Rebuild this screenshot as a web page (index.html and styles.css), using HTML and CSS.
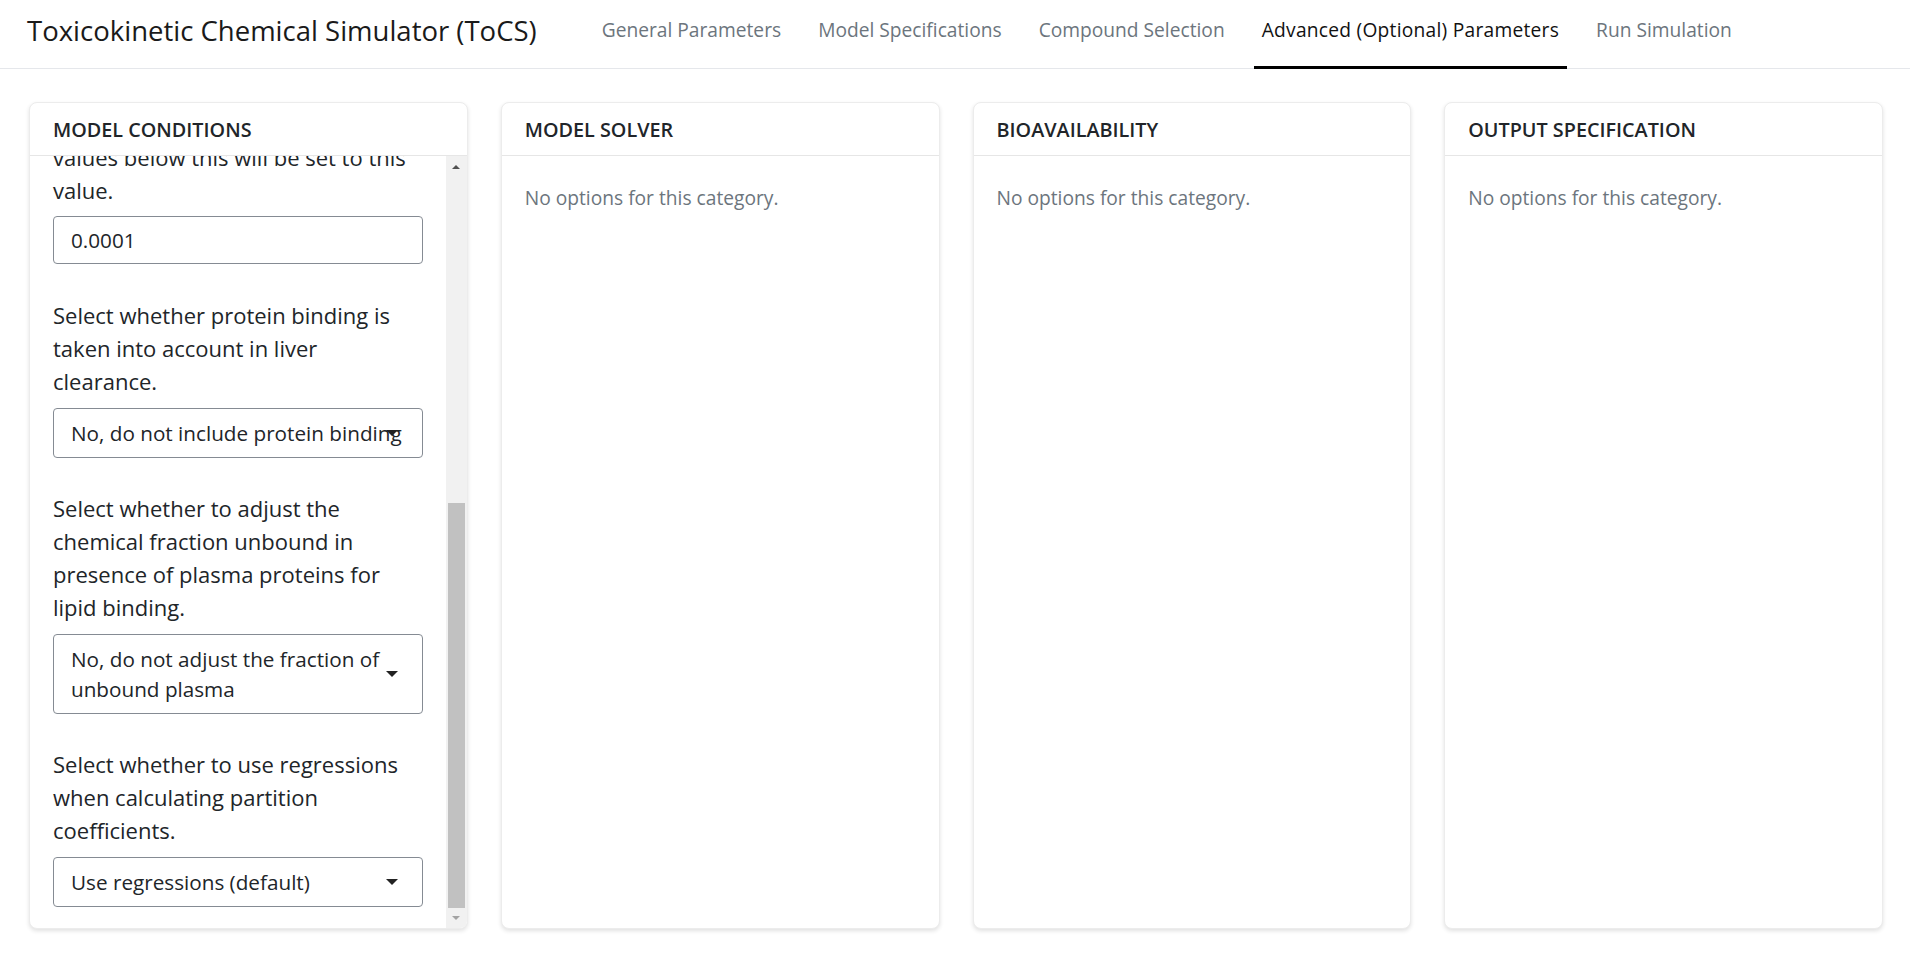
FILE: index.html
```html
<!DOCTYPE html>
<html lang="en">
<head>
<meta charset="utf-8">
<title>Toxicokinetic Chemical Simulator (ToCS)</title>
<link rel="stylesheet" href="styles.css">
</head>
<body>
<header class="topbar">
  <div class="brand">Toxicokinetic Chemical Simulator (ToCS)</div>
  <nav class="tabs">
    <a class="tab">General Parameters</a>
    <a class="tab">Model Specifications</a>
    <a class="tab">Compound Selection</a>
    <a class="tab active">Advanced (Optional) Parameters</a>
    <a class="tab">Run Simulation</a>
  </nav>
</header>
<main class="board">
  <section class="card">
    <div class="card-head">Model Conditions</div>
    <div class="card-body scroll-body">
      <div class="scroll-content">
        <div class="group first">
          <div class="label">Enter the minimum concentration (in µM) for the model solutions;<br>values below this will be set to this value.</div>
          <div class="field">0.0001</div>
        </div>
        <div class="group">
          <div class="label">Select whether protein binding is taken into account in liver clearance.</div>
          <div class="select"><span class="select-text">No, do not include protein binding</span><span class="caret"></span></div>
        </div>
        <div class="group">
          <div class="label">Select whether to adjust the chemical fraction unbound in presence of plasma proteins for lipid binding.</div>
          <div class="select"><span class="select-text">No, do not adjust the fraction of unbound plasma</span><span class="caret"></span></div>
        </div>
        <div class="group last">
          <div class="label">Select whether to use regressions when calculating partition coefficients.</div>
          <div class="select"><span class="select-text">Use regressions (default)</span><span class="caret"></span></div>
        </div>
      </div>
      <div class="scrollbar">
        <div class="sb-btn"><span class="sb-up"></span></div>
        <div class="sb-space"></div>
        <div class="sb-thumb"></div>
        <div class="sb-btn sb-btn-down"><span class="sb-down"></span></div>
      </div>
    </div>
  </section>
  <section class="card">
    <div class="card-head">Model Solver</div>
    <div class="card-body"><p class="empty">No options for this category.</p></div>
  </section>
  <section class="card">
    <div class="card-head">Bioavailability</div>
    <div class="card-body"><p class="empty">No options for this category.</p></div>
  </section>
  <section class="card">
    <div class="card-head">Output Specification</div>
    <div class="card-body"><p class="empty">No options for this category.</p></div>
  </section>
</main>
</body>
</html>
```
FILE: styles.css
```css
* { box-sizing: border-box; }
html, body { margin: 0; padding: 0; }
body {
  height: 100vh;
  display: flex;
  flex-direction: column;
  font-family: "Open Sans", "Noto Sans", sans-serif;
  color: #212529;
  background: #fff;
  overflow: hidden;
}
.topbar {
  height: 69px;
  flex: 0 0 69px;
  display: flex;
  align-items: stretch;
  border-bottom: 1px solid #e5e7eb;
  padding-left: 27px;
}
.brand {
  display: flex;
  align-items: center;
  font-size: 27.5px;
  color: #1a1a1a;
  margin-right: 47px;
  padding-bottom: 8px;
}
.tabs { display: flex; align-items: stretch; }
.tab {
  display: flex;
  align-items: center;
  padding: 0 8px 7px;
  margin: 0 10.5px;
  font-size: 19.2px;
  color: #6c757d;
  border-bottom: 3px solid transparent;
  margin-bottom: -1px;
}
.tab:first-child { margin-left: 10px; }
.tab.active { color: #111; border-bottom-color: #000; letter-spacing: 0.25px; }

.board {
  flex: 1;
  display: grid;
  grid-template-columns: repeat(4, 1fr);
  gap: 33px;
  padding: 33px 27px 28px 29px;
  min-height: 0;
}
.card {
  display: flex;
  flex-direction: column;
  border: 1px solid #ececec;
  border-radius: 8px;
  box-shadow: 0 2px 4px rgba(0,0,0,0.12);
  overflow: hidden;
  min-height: 0;
  background: #fff;
}
.card-head {
  flex: 0 0 53px;
  display: flex;
  align-items: center;
  padding: 0 23px;
  font-size: 19.8px;
  font-weight: 600;
  text-transform: uppercase;
  border-bottom: 1px solid #e6e6e6;
}
.card-body { flex: 1; padding: 27px 23px; min-height: 0; }
.empty { margin: 0; font-size: 19.2px; line-height: 29px; color: #6c757d; }

.scroll-body { display: flex; padding: 0; }
.scroll-content {
  flex: 1;
  min-width: 0;
  overflow: hidden;
  display: flex;
  flex-direction: column;
  justify-content: flex-end;
  padding: 0 23px 21px;
}
.group { margin-bottom: 34px; }
.group.first { margin-bottom: 35px; }
.group.first .label { margin-bottom: 9px; }
.group.last { margin-bottom: 0; }
.label { font-size: 22px; line-height: 33px; margin-bottom: 10px; color: #212529; }
.field, .select {
  border: 1px solid #858b93;
  border-radius: 4px;
  font-size: 20.7px;
  color: #212529;
  padding: 8px 17px;
}
.field { line-height: 30px; }
.select { position: relative; line-height: 30px; padding-top: 9px; padding-bottom: 9px; }
.caret {
  position: absolute;
  right: 24px;
  top: 50%;
  margin-top: -3px;
  width: 0; height: 0;
  border-left: 6px solid transparent;
  border-right: 6px solid transparent;
  border-top: 6px solid #222;
}

.scrollbar {
  flex: 0 0 21px;
  display: flex;
  flex-direction: column;
  background: #f1f1f1;
}
.sb-btn { flex: 0 0 21px; display: flex; align-items: center; justify-content: center; }
.sb-btn-down { flex-basis: 20px; }
.sb-space { flex: 1; }
.sb-thumb { flex: 0 0 405px; background: #c1c1c1; margin: 0 2px; }
.sb-up {
  width: 0; height: 0;
  border-left: 4px solid transparent;
  border-right: 4px solid transparent;
  border-bottom: 4px solid #505050;
}
.sb-down {
  width: 0; height: 0;
  border-left: 4px solid transparent;
  border-right: 4px solid transparent;
  border-top: 4px solid #a3a3a3;
}
```
